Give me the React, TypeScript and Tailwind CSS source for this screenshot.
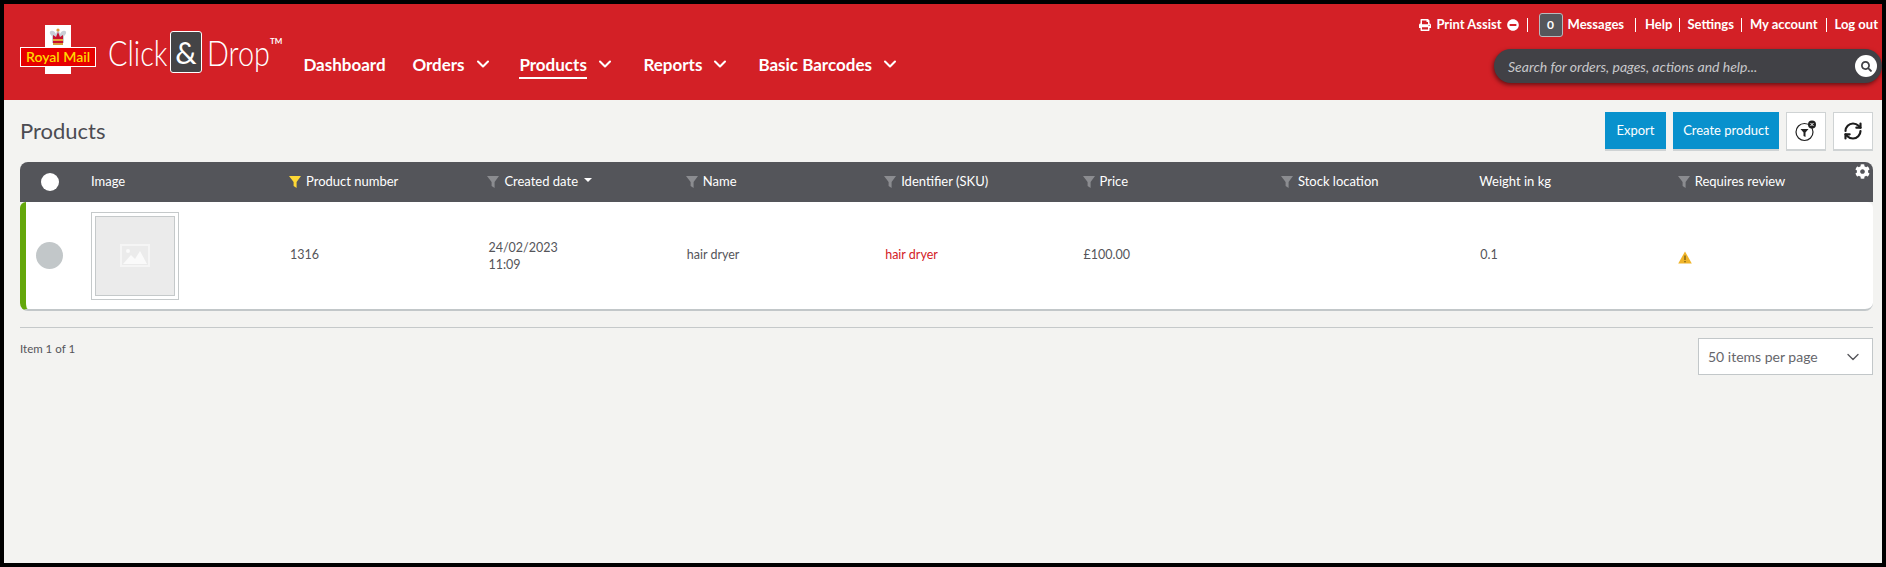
import React from "react";
import { FaPrint, FaMinusCircle, FaSearch, FaCog } from "react-icons/fa";
import { ChevronDown, RefreshCw } from "lucide-react";

const Funnel = ({ active }: { active?: boolean }) => (
  <svg width="12" height="12" viewBox="0 0 12 12" className="shrink-0">
    <path d="M0 0H12L7.6 6V12L4.6 10V6Z" fill={active ? "#fdd835" : "#8b8c90"} />
  </svg>
);

const Logo = () => (
  <div className="relative w-[76px] h-[49px] shrink-0 flex items-center justify-center">
    <div className="absolute left-[25px] top-0 w-[26px] h-[49px] bg-white flex justify-center pt-[3px]">
      <svg width="18" height="17" viewBox="0 0 18 17">
        <path d="M3 15V8C0 6 0 2 4 3C5 3 6 4 7 6L8 3H10L11 6C12 4 13 3 14 3C18 2 18 6 15 8V15Z" fill="#c9ced6" />
        <path d="M4 16V7L7 9L9 4L11 9L14 7V16Z" fill="#c8102e" />
        <rect x="4" y="11" width="10" height="2" fill="#e8a33d" />
        <rect x="4" y="15" width="10" height="2" fill="#d99b37" />
        <circle cx="9" cy="2" r="1.6" fill="#d99b37" />
      </svg>
    </div>
    <div className="absolute left-0 top-[22px] w-[76px] h-[20px] bg-[#e60000] border border-white flex items-center justify-center">
      <span className="text-[#ffd800] text-[14px] font-semibold leading-none whitespace-nowrap font-['Lato',sans-serif]">Royal Mail</span>
    </div>
  </div>
);

const NavItem = ({ label, active, chevron = true, cls }: { label: string; active?: boolean; chevron?: boolean; cls: string }) => (
  <div className={`flex items-center ${cls}`}>
    <span className={`text-[17px] font-bold text-white leading-[22px] pb-[1px] border-b-2 whitespace-nowrap ${active ? "border-white" : "border-transparent"}`}>{label}</span>
    {chevron && <ChevronDown size={20} strokeWidth={2.5} className="text-white ml-[8px] -mt-[6px]" />}
  </div>
);

const Sep = () => <span className="w-px h-[14px] bg-white" />;
const TopLink = ({ children }: { children: React.ReactNode }) => (
  <span className="text-white text-[13px] font-bold whitespace-nowrap">{children}</span>
);

const HeadCell = ({ label, filter = true, active, sort }: { label: string; filter?: boolean; active?: boolean; sort?: boolean }) => (
  <div className="flex items-center gap-[5px] text-white text-[13px] whitespace-nowrap">
    {filter && <Funnel active={active} />}
    <span>{label}</span>
    {sort && <span className="ml-[1px] -mt-[4px] w-0 h-0 border-x-[4px] border-x-transparent border-t-[4px] border-t-white" />}
  </div>
);

const cols = "grid grid-cols-[65px_198px_198.4px_198.4px_198.4px_198.4px_198.4px_198.4px_198.4px_1fr] items-center";

export default function App() {
  return (
    <div className="w-[1886px] h-[567px] bg-black p-[4px] font-['Lato',sans-serif] overflow-hidden">
      <div className="w-full h-[559px] bg-[#f3f3f1] flex flex-col">
        <header className="h-[96px] bg-[#d32026] flex justify-between shrink-0">
          <div className="flex items-start">
            <div className="ml-[16px] mt-[21px]"><Logo /></div>
            <div className="ml-[12px] mt-[27px] flex items-center h-[42px]">
              <span className="block w-[57px] text-white text-[36px] font-light leading-none origin-left scale-x-[0.8] whitespace-nowrap">Click</span>
              <span className="ml-[5px] w-[32px] h-[42px] bg-[#444446] border border-white rounded-[3px] flex items-center justify-center text-white text-[30px] leading-none">&amp;</span>
              <span className="block ml-[5px] w-[63px] text-white text-[36px] font-light leading-none origin-left scale-x-[0.8] whitespace-nowrap">Drop</span>
              <span className="text-white text-[8px] font-bold self-start mt-[4px]">TM</span>
            </div>
            <nav className="flex items-start mt-[50px] ml-[21px]">
              <NavItem label="Dashboard" chevron={false} cls="w-[109px]" />
              <NavItem label="Orders" cls="w-[107px]" />
              <NavItem label="Products" active cls="w-[124px]" />
              <NavItem label="Reports" cls="w-[115px]" />
              <NavItem label="Basic Barcodes" cls="w-[160px]" />
            </nav>
          </div>
          <div className="flex flex-col items-end">
            <div className="flex items-center h-[24px] mt-[9px] pr-[4px]">
              <FaPrint size={12} className="text-white mr-[5px]" />
              <TopLink>Print Assist</TopLink>
              <FaMinusCircle size={12} className="text-white ml-[5px] mr-[8px]" />
              <Sep />
              <span className="ml-[11px] mr-[5px] w-[24px] h-[24px] bg-[#55565b] border border-[#b8babd] rounded-[3px] flex items-center justify-center text-white text-[12px] font-bold">0</span>
              <TopLink>Messages</TopLink>
              <span className="w-[11px]" />
              <Sep />
              <span className="w-[9px]" />
              <TopLink>Help</TopLink>
              <span className="w-[7px]" />
              <Sep />
              <span className="w-[7px]" />
              <TopLink>Settings</TopLink>
              <span className="w-[7px]" />
              <Sep />
              <span className="w-[8px]" />
              <TopLink>My account</TopLink>
              <span className="w-[8px]" />
              <Sep />
              <span className="w-[8px]" />
              <TopLink>Log out</TopLink>
            </div>
            <div className="mt-[12px] w-[388px] h-[34px] rounded-full bg-[#414146] shadow-[-1px_2px_4px_rgba(0,0,0,0.5)] flex items-center justify-between pl-[14px] pr-[5px]">
              <span className="text-[14px] italic text-[#c8c8cb] whitespace-nowrap">Search for orders, pages, actions and help...</span>
              <span className="w-[22px] h-[22px] rounded-full bg-white flex items-center justify-center">
                <FaSearch size={11} className="text-[#414146]" />
              </span>
            </div>
          </div>
        </header>

        <main className="flex-1 pl-[16px] pr-[9px] flex flex-col">
          <div className="h-[62px] flex items-start justify-between shrink-0">
            <h1 className="mt-[17px] text-[22px] leading-[28px] text-[#4c4c52]">Products</h1>
            <div className="flex mt-[12px] gap-[7px]">
              <button className="h-[39px] w-[61px] bg-[#0891cd] border-b-2 border-[#cfd3d4] text-white text-[13px]">Export</button>
              <button className="h-[39px] w-[106px] bg-[#0891cd] border-b-2 border-[#cfd3d4] text-white text-[13px]">Create product</button>
              <button className="h-[39px] w-[40px] bg-white border border-[#cfd3d4] border-b-2 flex items-center justify-center">
                <svg width="24" height="24" viewBox="0 0 24 24">
                  <circle cx="10.5" cy="13" r="8.5" fill="none" stroke="#222" strokeWidth="1.2" />
                  <path d="M6.5 10H14.5L11.5 13.5V18L9.5 17V13.5Z" fill="#222" />
                  <circle cx="18" cy="5.5" r="4" fill="#222" />
                  <path d="M16.5 4L19.5 7M19.5 4L16.5 7" stroke="#fff" strokeWidth="1" />
                </svg>
              </button>
              <button className="h-[39px] w-[40px] bg-white border border-[#cfd3d4] border-b-2 flex items-center justify-center">
                <RefreshCw size={20} strokeWidth={2.6} className="text-[#1c1c1c]" />
              </button>
            </div>
          </div>

          <div className="relative rounded-t-[8px] bg-[#54555a] h-[40px] shrink-0">
            <div className={`${cols} h-full pl-[6px]`}>
              <div className="pl-[15px]"><span className="block w-[18px] h-[18px] rounded-full bg-white" /></div>
              <HeadCell label="Image" filter={false} />
              <HeadCell label="Product number" active />
              <HeadCell label="Created date" sort />
              <HeadCell label="Name" />
              <HeadCell label="Identifier (SKU)" />
              <HeadCell label="Price" />
              <HeadCell label="Stock location" />
              <HeadCell label="Weight in kg" filter={false} />
              <HeadCell label="Requires review" />
            </div>
            <FaCog size={15} className="absolute right-[3px] top-[2px] text-white" />
          </div>

          <div className={`${cols} h-[109px] shrink-0 bg-white border-l-[6px] border-l-[#64a70b] border-b-2 border-b-[#c2c7c9] rounded-b-[8px] rounded-tl-[6px] rounded-tr-[6px] text-[12.5px] text-[#55555a]`}>
            <div className="pl-[10px]"><span className="block w-[27px] h-[27px] rounded-full bg-[#c2c7c9]" /></div>
            <div className="w-[88px] h-[88px] border border-[#c5c9ca] p-[3px]">
              <div className="w-full h-full border border-[#c5c9ca] bg-[#ebebeb] flex items-center justify-center">
                <svg width="30" height="23" viewBox="0 0 30 23">
                  <rect x="1" y="1" width="28" height="21" fill="none" stroke="#f5f5f5" strokeWidth="2" />
                  <path d="M3 20L11 11L15 15L20 7L27 20Z" fill="#fafafa" />
                  <circle cx="8" cy="7" r="2" fill="#fafafa" />
                </svg>
              </div>
            </div>
            <div className="pl-[1px]">1316</div>
            <div className="pl-[1px] leading-[17px]">24/02/2023<br />11:09</div>
            <div className="pl-[1px]">hair dryer</div>
            <div className="pl-[1px] text-[#d32026]">hair dryer</div>
            <div className="pl-[1px]">£100.00</div>
            <div />
            <div className="pl-[1px]">0.1</div>
            <div className="pt-[3px]">
              <svg width="14" height="13" viewBox="0 0 14 13" className="block">
                <path d="M7 0.5L13.8 12.5H0.2Z" fill="#f0b429" />
                <rect x="6.4" y="4.5" width="1.2" height="4.5" fill="#6b5310" />
                <rect x="6.4" y="10" width="1.2" height="1.3" fill="#6b5310" />
              </svg>
            </div>
          </div>

          <div className="mt-[16px] border-t border-[#c5c9ca] flex justify-between items-start shrink-0">
            <span className="mt-[12px] text-[11.5px] text-[#55555a]">Item 1 of 1</span>
            <div className="mt-[10px] w-[175px] h-[37px] bg-white border border-[#c2c7c9] flex items-center justify-between pl-[9px] pr-[9px] text-[14px] text-[#66666b]">
              <span>50 items per page</span>
              <ChevronDown size={20} strokeWidth={1.6} className="text-[#55555a]" />
            </div>
          </div>
        </main>
      </div>
    </div>
  );
}
